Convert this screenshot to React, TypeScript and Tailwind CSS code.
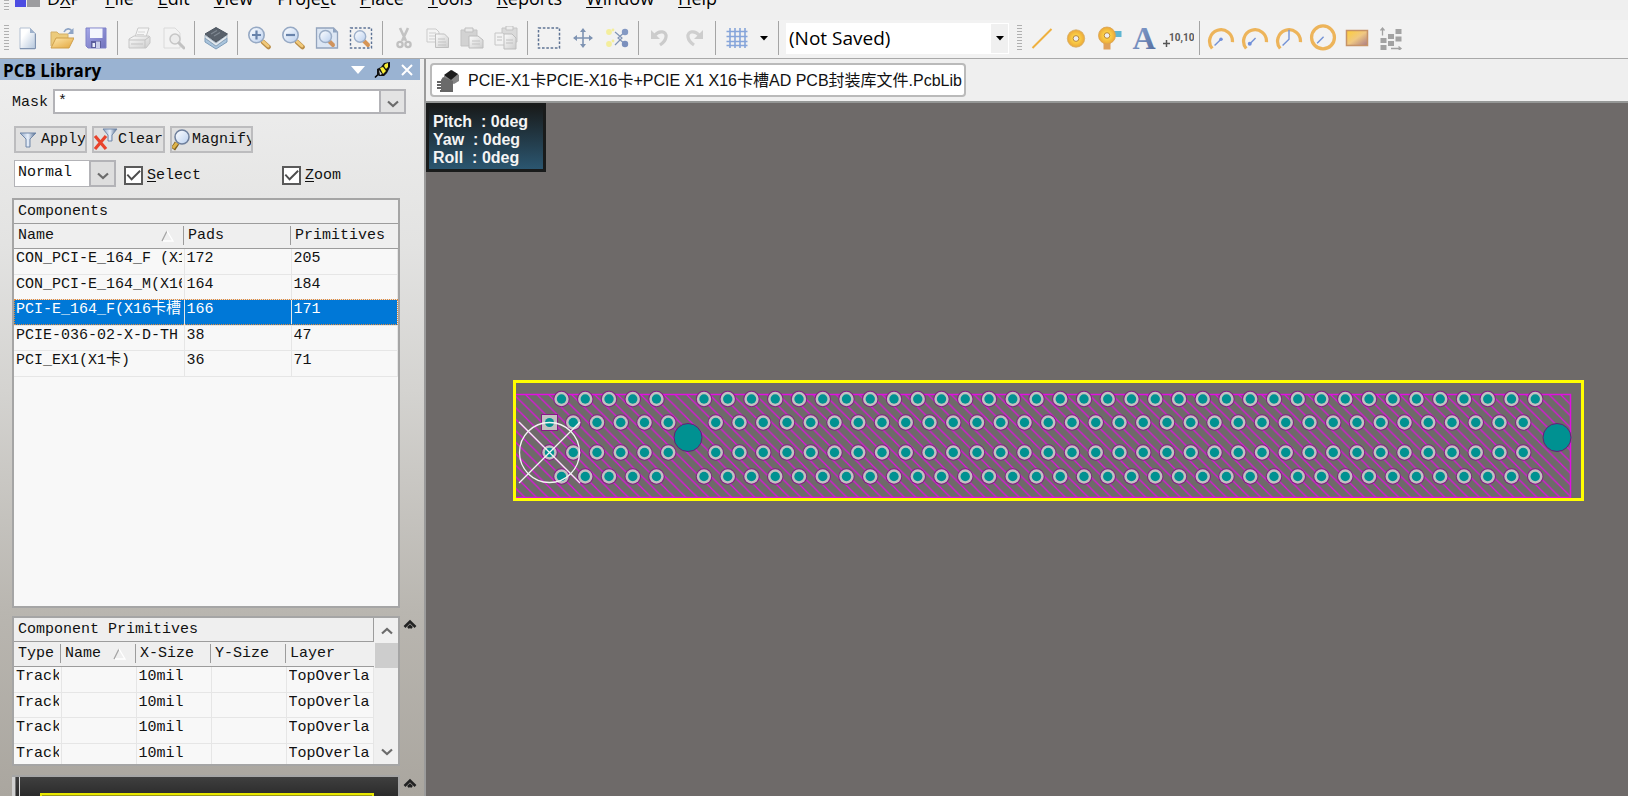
import React, { ReactNode } from "react";

const GOLD = "#edb45a";

function Icon({ children, size = 24 }: { children: ReactNode; size?: number }) {
  return (
    <svg width={size} height={size} viewBox="0 0 24 24" fill="none" className="shrink-0" aria-hidden="true">
      {children}
    </svg>
  );
}

function Gradients() {
  return (
    <svg width="0" height="0" className="absolute" aria-hidden="true">
      <defs>
        <linearGradient id="paper" x1="0" y1="0" x2="1" y2="1">
          <stop offset="0.3" stopColor="#ffffff" />
          <stop offset="1" stopColor="#b4c6dc" />
        </linearGradient>
        <linearGradient id="folder" x1="0" y1="0" x2="1" y2="1">
          <stop offset="0" stopColor="#ffe9ae" />
          <stop offset="1" stopColor="#e2a63d" />
        </linearGradient>
        <linearGradient id="disk" x1="0" y1="0" x2="1" y2="1">
          <stop offset="0" stopColor="#a6a8e8" />
          <stop offset="1" stopColor="#7072bc" />
        </linearGradient>
        <linearGradient id="grey" x1="0" y1="0" x2="1" y2="1">
          <stop offset="0" stopColor="#fbfbfb" />
          <stop offset="1" stopColor="#cdcdcd" />
        </linearGradient>
        <linearGradient id="lens" x1="0" y1="0" x2="1" y2="1">
          <stop offset="0" stopColor="#ffffff" />
          <stop offset="1" stopColor="#b9cfee" />
        </linearGradient>
        <linearGradient id="fillRect" x1="0" y1="0" x2="1" y2="1">
          <stop offset="0" stopColor="#ffce35" />
          <stop offset="0.5" stopColor="#f0c882" />
          <stop offset="1" stopColor="#a97a86" />
        </linearGradient>
        <linearGradient id="funnel" x1="0" y1="0" x2="1" y2="0">
          <stop offset="0" stopColor="#8ea4c4" />
          <stop offset="0.5" stopColor="#e8f0fb" />
          <stop offset="1" stopColor="#4a6288" />
        </linearGradient>
        <radialGradient id="ring">
          <stop offset="0.3" stopColor="#ffd84a" />
          <stop offset="1" stopColor="#eba739" />
        </radialGradient>
        <linearGradient id="letter" x1="0" y1="0" x2="1" y2="1">
          <stop offset="0" stopColor="#93addb" />
          <stop offset="1" stopColor="#4f6799" />
        </linearGradient>
      </defs>
    </svg>
  );
}

const NewIcon = () => (
  <Icon>
    <path d="M4 2h10l5 5v16H4z" fill="url(#paper)" stroke="#b3c0d2" />
    <path d="M4 22.500h15.500V7.500" stroke="#8093b0" />
    <path d="M14 2l5 5h-5z" fill="#9fb2cc" />
  </Icon>
);
const OpenIcon = () => (
  <Icon>
    <path d="M1 20V6h6l2 2h9v5" fill="#eccb7c" stroke="#d3b068" />
    <path d="M1 22L6 12h18l-5 10z" fill="url(#folder)" stroke="#cf9f4b" />
    <path d="M14 6c2-4 6-4 8-1" stroke="#8ea4c5" strokeWidth="1.600" />
    <path d="M23.500 2v6h-6z" fill="#8ea4c5" />
  </Icon>
);
const SaveIcon = () => (
  <Icon>
    <path d="M2 2h20v20H4l-2-2z" fill="url(#disk)" stroke="#7f81c8" />
    <path d="M6 2.500h12.500V12H6z" fill="#f4f6fd" />
    <path d="M7 15h10v7H7z" fill="#5c5e9e" />
    <path d="M12 15.500h4V22h-4z" fill="#c9cdea" />
    <path d="M8.500 17h2.500v4H8.500z" fill="#e9ecf8" />
  </Icon>
);
const PrintIcon = () => (
  <Icon>
    <path d="M8 11l3-9h11l-3 9" fill="#f6f6f6" stroke="#cbcbcb" />
    <path d="M11 6h7M10 8.500h7" stroke="#d6d6d6" />
    <path d="M2 13l5-3h15l1 1v6l-4 5H2z" fill="url(#grey)" stroke="#c6c6c6" />
    <path d="M2 14h16l4-3M18 14v8M4 18h12" stroke="#c3c3c3" />
  </Icon>
);
const PreviewIcon = () => (
  <Icon>
    <path d="M3 2h11l5 5v15H3z" fill="#f3f3f3" stroke="#dadada" />
    <circle cx="14" cy="13" r="5" fill="#ececec" stroke="#c6c6c6" strokeWidth="1.500" />
    <path d="M18 17l5 5" stroke="#c2c2c2" strokeWidth="3" strokeLinecap="round" />
  </Icon>
);
const BrowseIcon = () => (
  <Icon>
    <path d="M1 12l11 8 11-8v4l-11 7L1 16z" fill="#a9c4dc" stroke="#7f9dba" />
    <path d="M1 9l11 8 11-8v3l-11 8L1 12z" fill="#e3e9ee" stroke="#7890a6" strokeWidth=".6" />
    <path d="M1 8l11-6.500L23.500 8 12 16z" fill="#59616b" stroke="#4c5560" />
    <path d="M7 8l6-3.500M10 10l6-3.500" stroke="#7f8892" strokeWidth="1.300" />
  </Icon>
);
function Lens({ sign }: { sign: "plus" | "minus" }) {
  return (
    <Icon>
      <path d="M16 16l5.500 5" stroke="#b98c46" strokeWidth="4.600" strokeLinecap="round" />
      <path d="M16 15.500l5 4.500" stroke="#f1c97a" strokeWidth="3" strokeLinecap="round" />
      <circle cx="9.500" cy="9" r="7.700" fill="url(#lens)" stroke="#96a9c4" strokeWidth="1.600" />
      <path d={sign === "plus" ? "M5 9h9M9.500 4.500v9" : "M5 9h9"} stroke="#6883ab" strokeWidth="2.200" />
    </Icon>
  );
}
const FitIcon = () => (
  <Icon>
    <path d="M1.500 2h17l4 4v16h-21z" fill="#dce6f3" stroke="#93a4bd" strokeWidth="1.300" />
    <path d="M18 2v4.500h4.500" fill="#8ea3c0" />
    <path d="M14 15l4 4" stroke="#d0935c" strokeWidth="4" strokeLinecap="round" />
    <circle cx="10.500" cy="10.500" r="6" fill="url(#lens)" stroke="#9badc6" strokeWidth="1.500" />
  </Icon>
);
const ZoomAreaIcon = () => (
  <Icon>
    <rect x="1.500" y="2" width="21" height="20" stroke="#5c7295" strokeWidth="1.400" strokeDasharray="2.500 1.800" />
    <path d="M15 15l4 4" stroke="#d79555" strokeWidth="4" strokeLinecap="round" />
    <circle cx="11" cy="10.500" r="5.700" fill="url(#lens)" stroke="#9db0cb" strokeWidth="1.400" />
  </Icon>
);
const CutIcon = () => (
  <Icon>
    <path d="M8 2l6 13M16 2l-6 13" stroke="#c3c3c3" strokeWidth="2.600" />
    <circle cx="8" cy="18.500" r="2.600" stroke="#c0c0c0" strokeWidth="2.300" />
    <circle cx="16" cy="18.500" r="2.600" stroke="#c0c0c0" strokeWidth="2.300" />
  </Icon>
);
const CopyIcon = () => (
  <Icon>
    <path d="M1 3h9l3 3v10H1z" fill="#f4f4f4" stroke="#cbcbcb" />
    <path d="M3 7h7M3 10h7M3 13h7" stroke="#cfcfcf" />
    <path d="M9.500 8h9l4 4v9.500h-13z" fill="url(#grey)" stroke="#bfbfbf" />
    <path d="M12 13h7M12 16h8M12 19h8" stroke="#c3c3c3" />
  </Icon>
);
const PasteIcon = () => (
  <Icon>
    <path d="M1 4h16v16H1z" fill="#d2d2d2" stroke="#c3c3c3" />
    <path d="M5 2h8v4H5z" fill="#e9e9e9" stroke="#bfbfbf" />
    <path d="M9 10h9l5 4v8H9z" fill="url(#grey)" stroke="#bcbcbc" />
    <path d="M12 15h8M12 18h8" stroke="#c3c3c3" />
  </Icon>
);
const StampIcon = () => (
  <Icon>
    <path d="M8 2h15v14H8z" fill="#dadada" stroke="#c6c6c6" />
    <path d="M12 0h7v4h-7z" fill="#ededed" stroke="#c3c3c3" />
    <path d="M1 7h8l3 3v9H1z" fill="#f3f3f3" stroke="#c6c6c6" />
    <path d="M10 8h8l4 4v11H10z" fill="url(#grey)" stroke="#bdbdbd" />
    <path d="M3 11h5M3 14h5M12 14h7M12 17h7" stroke="#c0c0c0" />
  </Icon>
);
const SelectIcon = () => (
  <Icon>
    <rect x="1.500" y="2" width="21" height="20" stroke="#5f7494" strokeWidth="1.500" strokeDasharray="2.600 1.700" />
  </Icon>
);
const MoveIcon = () => (
  <Icon>
    <path d="M12 3v18M3 12h18" stroke="#7e93b2" strokeWidth="1.600" />
    <path d="M12 2L9 6h6zM12 22l-3-4h6zM2 12l4-3v6zM22 12l-4-3v6z" fill="#7e93b2" />
  </Icon>
);
const DeselectIcon = () => (
  <Icon>
    <path d="M10 6l7 6-7 7M21 5l-8 7 8 7" stroke="#8094b5" strokeWidth="1.200" />
    <circle cx="4" cy="6" r="2.900" fill="#f4ee9c" />
    <circle cx="8" cy="4" r="1.400" fill="#f4ee9c" />
    <circle cx="4" cy="18" r="2.900" fill="#f4ee9c" />
    <circle cx="8" cy="15" r="1.400" fill="#f4ee9c" />
    <circle cx="20" cy="6" r="3.200" fill="#8499c3" />
    <circle cx="20" cy="18" r="3.200" fill="#7b90bd" />
  </Icon>
);
const UndoIcon = () => (
  <Icon>
    <path d="M7 9c4-5 12-4 11 2-.5 4-3 6-6 8" stroke="#cbcbcb" strokeWidth="3.200" />
    <path d="M3 4v9h9z" fill="#cdcdcd" />
  </Icon>
);
const RedoIcon = () => (
  <Icon>
    <path d="M17 9C13 4 5 5 6 11c.5 4 3 6 6 8" stroke="#cfcfcf" strokeWidth="3.200" />
    <path d="M21 4v9h-9z" fill="#cdcdcd" />
  </Icon>
);
const GridIcon = () => (
  <Icon>
    <path d="M5 2v20M10 2v20M15 2v20M20 2v20M1.500 5.500h21M1.500 10.500h21M1.500 15.500h21M1.500 19.500h21" stroke="#86a5da" strokeWidth="1.600" />
  </Icon>
);
const LineIcon = () => (
  <Icon>
    <path d="M2.500 22L21.500 3" stroke="#eeb03f" strokeWidth="2" />
  </Icon>
);
const PadIcon = () => (
  <Icon>
    <circle cx="12" cy="12.500" r="8.700" fill="url(#ring)" stroke="#d6b06c" strokeWidth=".8" />
    <circle cx="12" cy="12.500" r="2.900" fill="#eeeef2" stroke="#b98531" />
  </Icon>
);
const ViaIcon = () => (
  <Icon>
    <path d="M13 5h10.500v6H13z" fill="#5eb6d2" />
    <path d="M5.500 14h7v9.500h-7z" fill="#e0a05b" />
    <circle cx="9" cy="9.500" r="8.500" fill="url(#ring)" stroke="#d9a353" strokeWidth=".8" />
    <circle cx="9" cy="9.500" r="2.800" fill="#eeeef2" stroke="#b98531" />
  </Icon>
);
const TextIcon = () => (
  <svg width="26" height="26" viewBox="0 0 26 26" aria-hidden="true">
    <text x="13" y="24" textAnchor="middle" fontSize="32" fontWeight="700" fill="url(#letter)" fontFamily="Liberation Serif, serif">
      A
    </text>
  </svg>
);
const CoordIcon = () => (
  <svg width="32" height="24" viewBox="0 0 32 24" aria-hidden="true">
    <path d="M1 17.500h7M4.500 14v7" stroke="#555" strokeWidth="1.500" />
    <text x="7" y="15" fontSize="10" fontWeight="700" fill="#5a5a5a" fontFamily="Roboto, sans-serif">
      10,10
    </text>
  </svg>
);
function ArcIcon({ hand }: { hand: ReactNode }) {
  return (
    <Icon size={28}>
      <path d="M4.500 21A9.800 9.800 0 1 1 21.800 15.500" stroke={GOLD} strokeWidth="2.800" />
      {hand}
    </Icon>
  );
}
const CircleIcon = () => (
  <Icon size={28}>
    <circle cx="12" cy="11.500" r="9.800" stroke={GOLD} strokeWidth="2.800" />
    <path d="M12.500 11L7 16.500" stroke="#7392d6" strokeWidth="1.200" />
  </Icon>
);
const FillIcon = () => (
  <Icon>
    <rect x="1.500" y="4.500" width="21" height="15" fill="url(#fillRect)" stroke="#c69367" strokeWidth="1.500" />
  </Icon>
);
const ArrayIcon = () => (
  <Icon>
    <path d="M1.500 12h6v5h-6zM1.500 19h6v5h-6zM9 8h6v5H9zM9 15h6v5H9zM16.500 3h6v5h-6zM16.500 10.500h6v5h-6z" fill="#a2a2a2" />
    <path d="M3.500 9.500V3M1.500 4.500L3.500 2l2 2.500M12 22.500h9M19.500 20.500l2.500 2-2.500 2" stroke="#a2a2a2" strokeWidth="1.300" />
  </Icon>
);
const Chevron = ({ className }: { className?: string }) => (
  <svg width="14" height="8" viewBox="0 0 14 8" fill="none" className={className} aria-hidden="true">
    <path d="M2 1.500l5 4.500 5-4.500" stroke="#6b6b6b" strokeWidth="2.200" />
  </svg>
);

const toolGroups: [string, ReactNode][][] = [
  [["New", <NewIcon />], ["Open", <OpenIcon />], ["Save", <SaveIcon />]],
  [["Print", <PrintIcon />], ["Print preview", <PreviewIcon />]],
  [["Browse", <BrowseIcon />]],
  [["Zoom in", <Lens sign="plus" />], ["Zoom out", <Lens sign="minus" />], ["Fit document", <FitIcon />], ["Zoom area", <ZoomAreaIcon />]],
  [["Cut", <CutIcon />], ["Copy", <CopyIcon />], ["Paste", <PasteIcon />], ["Rubber stamp", <StampIcon />]],
  [["Select", <SelectIcon />], ["Move", <MoveIcon />], ["Deselect", <DeselectIcon />]],
  [["Undo", <UndoIcon />], ["Redo", <RedoIcon />]],
];

const placeGroups: [string, ReactNode][][] = [
  [["Line", <LineIcon />], ["Pad", <PadIcon />], ["Via", <ViaIcon />], ["String", <TextIcon />], ["Coordinate", <CoordIcon />]],
  [
    ["Arc by center", <ArcIcon hand={<><path d="M6.500 18.500L12 13" stroke="#7392d6" strokeWidth="1.200" /><circle cx="12" cy="13" r="1.500" fill="#6f8fdc" /></>} />],
    ["Arc by edge", <ArcIcon hand={<><path d="M7 17.500L12.500 12" stroke="#7392d6" strokeWidth="1.200" /><circle cx="7.500" cy="17" r="1.700" fill="#6f8fdc" /></>} />],
    ["Arc any angle", <ArcIcon hand={<path d="M12 5v8l-5.500 5.500" stroke="#7392d6" strokeWidth="1.200" />} />],
    ["Full circle", <CircleIcon />],
    ["Fill", <FillIcon />],
    ["Paste array", <ArrayIcon />],
  ],
];

const ToolButton = ({ label, children }: { label: string; children: ReactNode }) => (
  <button type="button" aria-label={label} className="flex h-8 w-[34px] shrink-0 items-center justify-center">
    {children}
  </button>
);

const Separator = () => (
  <div className="flex h-[34px] w-[9px] shrink-0 justify-center">
    <div className="w-px bg-[#a5a5a5]" />
  </div>
);

const Grip = () => (
  <div className="h-[26px] w-[5px] shrink-0 bg-[repeating-linear-gradient(#b0b0b0_0_1px,#f2f2f2_1px_3px)]" />
);

const menus = [
  ["D", "X", "P"],
  ["", "F", "ile"],
  ["", "E", "dit"],
  ["", "V", "iew"],
  ["Proje", "c", "t"],
  ["", "P", "lace"],
  ["", "T", "ools"],
  ["", "R", "eports"],
  ["", "W", "indow"],
  ["", "H", "elp"],
];

const components = [
  ["CON_PCI-E_164_F (X1", 172, 205],
  ["CON_PCI-E_164_M(X16", 164, 184],
  ["PCI-E_164_F(X16卡槽", 166, 171],
  ["PCIE-036-02-X-D-TH", 38, 47],
  ["PCI_EX1(X1卡)", 36, 71],
];

const primitives = [0, 1, 2, 3].map(() => ["Track", "", "10mil", "", "TopOverla"]);

const SortMark = () => (
  <svg width="14" height="12" viewBox="0 0 14 12" fill="none" className="shrink-0" aria-hidden="true">
    <path d="M1 11L6 1" stroke="#a3a3a3" strokeWidth="1.300" />
    <path d="M6 1l6 10H2" stroke="#fff" strokeWidth="1.300" />
  </svg>
);

function HeaderCell({ children, sorted, last }: { children: ReactNode; sorted?: boolean; last?: boolean }) {
  return (
    <th scope="col" className="h-6 border-b border-[#9c9c9c] bg-[#efefef] p-0 text-left font-normal">
      <div className={last ? "flex h-[19px] items-center pl-1" : "flex h-[19px] items-center justify-between border-r border-[#9c9c9c] pl-1 pr-2"}>
        {children}
        {sorted && <SortMark />}
      </div>
    </th>
  );
}

function BodyRow({ cells, selected }: { cells: ReactNode[]; selected?: boolean }) {
  return (
    <tr
      className={
        selected
          ? "h-[26px] bg-[#0078d7] text-white outline-1 -outline-offset-1 outline-dotted outline-[#e08a3c]"
          : "h-[25px] odd:h-[26px]"
      }
    >
      {cells.map((cell, c) => (
        <td key={c} className="border-b border-r border-[#e6e6e6] p-0 pb-1 pl-[2px] pr-[2px]">
          <div className="overflow-hidden whitespace-nowrap">{cell}</div>
        </td>
      ))}
    </tr>
  );
}

function Check({ id, mnemonic, rest }: { id: string; mnemonic: string; rest: string }) {
  return (
    <div className="flex items-center gap-1">
      <span className="relative flex h-[19px] w-[19px]">
        <input
          id={id}
          type="checkbox"
          defaultChecked
          className="peer h-full w-full appearance-none border-2 border-[#5a5a5a] bg-white"
        />
        <svg viewBox="0 0 20 19" fill="none" className="pointer-events-none absolute inset-0 hidden peer-checked:block" aria-hidden="true">
          <path d="M3.500 9l4.500 5 9-9" stroke="#4d4d4d" strokeWidth="2" />
        </svg>
      </span>
      <label htmlFor={id}>
        <span className="underline underline-offset-2">{mnemonic}</span>
        {rest}
      </label>
    </div>
  );
}

const Collapse = () => (
  <button type="button" aria-label="Collapse section" className="flex h-4 w-5 items-center justify-center">
    <svg width="14" height="10" viewBox="0 0 14 10" fill="none">
      <path d="M1.500 8L7 2.500 12.500 8M5 9l2-2 2 2" stroke="#222" strokeWidth="2.600" />
    </svg>
  </button>
);

function LibraryPanel() {
  return (
    <aside className="flex w-[426px] shrink-0 flex-col overflow-hidden border-r-2 border-[#9b9b9b] bg-[linear-gradient(#efefef_0%,#e3e3e2_25%,#d4d3d0_45%,#b9b6b0_75%,#aaa69f_100%)] font-['Liberation_Mono','Noto_Sans_CJK_SC',monospace] text-[15px] leading-5 text-[#111]">
      <div className="mr-1 flex h-[21px] shrink-0 items-center bg-[#9ab3d2] pl-[3px] pr-[6px] font-['Open_Sans',sans-serif] text-[17px] font-bold text-black">
        <h2 className="flex-1 pt-[2px]">PCB Library</h2>
        <div className="flex items-center gap-2">
          <button type="button" aria-label="Panel menu">
            <svg width="16" height="10" viewBox="0 0 16 10"><path d="M1 1h14L8 9z" fill="#fff" /></svg>
          </button>
          <button type="button" aria-label="Pin panel">
            <svg width="18" height="18" viewBox="0 0 18 18">
              <path d="M1 16.500l4-4" stroke="#000" strokeWidth="1.600" />
              <path d="M3 8l4-2 3-4 6-1v5l-3 6-3 3H5L3 13z" fill="#111" />
              <path d="M6 7l3-1 3 4-3 3zM11 3l3-1v4l-2 2-2-3z" fill="#f7ee35" />
              <path d="M5 9l3 4-2 1z" fill="#d9dcd0" />
            </svg>
          </button>
          <button type="button" aria-label="Close panel">
            <svg width="14" height="14" viewBox="0 0 14 14"><path d="M2 2l10 10M12 2L2 12" stroke="#fff" strokeWidth="2" /></svg>
          </button>
        </div>
      </div>

      <div className="mt-[9px] flex h-[25px] shrink-0 items-center pl-3 pr-[18px]">
        <label htmlFor="mask" className="w-[41px] pt-[2px]">Mask</label>
        <div className="flex h-full flex-1 border-2 border-[#b3b3b7] bg-white">
          <input id="mask" defaultValue="*" className="min-w-0 flex-1 bg-transparent px-[3px] outline-none" />
          <button type="button" aria-label="Mask history" className="flex w-[25px] items-center justify-center border-l-2 border-[#b3b3b7] bg-[#e3e3e3] pt-1">
            <Chevron />
          </button>
        </div>
      </div>

      <div className="mt-3 flex h-[27px] shrink-0 gap-[5px] pl-[14px]">
        <button type="button" className="flex w-[73px] items-center gap-1 overflow-hidden border-2 border-[#bcbcbe] bg-[#e0e0e0] pl-[3px]">
          <svg width="18" height="16" viewBox="0 0 18 16" className="shrink-0" aria-hidden="true">
            <path d="M1 1h16l-6 6v8H7V7z" fill="url(#funnel)" stroke="#7087a8" />
          </svg>
          Apply
        </button>
        <button type="button" className="flex w-[73px] items-center overflow-hidden border-2 border-[#bcbcbe] bg-[#e0e0e0]">
          <svg width="24" height="24" viewBox="0 0 24 24" className="shrink-0" aria-hidden="true">
            <path d="M9 1h14l-5 6v6h-4V7z" fill="url(#funnel)" stroke="#7087a8" />
            <path d="M1 8l11 13M12 8L1 21" stroke="#e8432c" strokeWidth="3.200" />
          </svg>
          Clear
        </button>
        <button type="button" className="flex w-[83px] items-center gap-[2px] overflow-hidden border-2 border-[#bcbcbe] bg-[#e0e0e0]">
          <svg width="18" height="22" viewBox="0 0 18 22" className="shrink-0" aria-hidden="true">
            <path d="M5 14l-4 6" stroke="#80601c" strokeWidth="5" />
            <path d="M5 14l-4 5" stroke="#dfb44a" strokeWidth="3" />
            <circle cx="10" cy="8" r="7" fill="url(#lens)" stroke="#6e7f9c" strokeWidth="1.500" />
          </svg>
          Magnify
        </button>
      </div>

      <div className="mt-[7px] flex h-[27px] shrink-0 items-center pl-[14px]">
        <div className="relative mr-[8px] h-full w-[102px]">
          <select aria-label="Display mode" defaultValue="Normal" className="h-full w-full appearance-none border border-[#b3b3b7] bg-[linear-gradient(90deg,#fff_0_75px,#dedede_75px)] pb-[2px] pl-[3px] outline-none">
            <option>Normal</option>
          </select>
          <span className="pointer-events-none absolute inset-y-0 right-0 flex w-[27px] items-center justify-center border-2 border-[#b3b3b7] pt-1">
            <Chevron />
          </span>
        </div>
        <div className="w-[158px] pt-1"><Check id="select" mnemonic="S" rest="elect" /></div>
        <div className="pt-1"><Check id="zoom" mnemonic="Z" rest="oom" /></div>
      </div>

      <section className="ml-3 mr-6 mt-[11px] min-h-0 flex-1 overflow-hidden border-2 border-[#a5a5a5] bg-[#f8f8f8]">
        <table className="w-full table-fixed border-collapse">
          <caption className="h-6 border-b border-[#9c9c9c] bg-[#efefef] pl-1 text-left leading-6">Components</caption>
          <colgroup><col className="w-[170px]" /><col className="w-[107px]" /><col /></colgroup>
          <thead>
            <tr>
              <HeaderCell sorted>Name</HeaderCell>
              <HeaderCell>Pads</HeaderCell>
              <HeaderCell last>Primitives</HeaderCell>
            </tr>
          </thead>
          <tbody>
            {components.map((row, r) => (
              <BodyRow key={r} cells={row} selected={r === 2} />
            ))}
          </tbody>
        </table>
      </section>

      <div className="mt-2 flex h-[150px] shrink-0 pl-3">
        <section className="flex w-[388px] overflow-hidden border-2 border-[#a5a5a5] bg-[#f8f8f8]">
          <table className="w-[360px] table-fixed border-collapse self-start">
            <caption className="h-6 border-b border-r border-[#9c9c9c] bg-[#efefef] pl-1 text-left leading-6">Component Primitives</caption>
            <colgroup>
              <col className="w-[47px]" /><col className="w-[75px]" /><col className="w-[75px]" /><col className="w-[75px]" /><col />
            </colgroup>
            <thead>
              <tr>
                <HeaderCell>Type</HeaderCell>
                <HeaderCell sorted>Name</HeaderCell>
                <HeaderCell>X-Size</HeaderCell>
                <HeaderCell>Y-Size</HeaderCell>
                <HeaderCell last>Layer</HeaderCell>
              </tr>
            </thead>
            <tbody>
              {primitives.map((row, r) => (
                <BodyRow key={r} cells={row} />
              ))}
            </tbody>
          </table>
          <div className="flex flex-1 flex-col bg-[#f0f0f0] pl-px">
            <button type="button" aria-label="Scroll up" className="flex h-[25px] items-center justify-center">
              <Chevron className="rotate-180" />
            </button>
            <div className="h-[25px] bg-[#cdcdcd]" />
            <div className="flex-1" />
            <button type="button" aria-label="Scroll down" className="flex h-6 items-center justify-center">
              <Chevron />
            </button>
          </div>
        </section>
        <Collapse />
      </div>

      <div className="mt-[9px] flex h-[21px] shrink-0 pl-3">
        <div className="flex w-[388px] border-t-2 border-r-2 border-[#a5a5a5] bg-[linear-gradient(#3f3f3f,#2b2b2b)]">
          <div className="mr-px w-1 border-r border-[#777] bg-[#d0d0d0]" />
          <div className="w-[3px] border-r border-[#d8d8d8]" />
          <div className="ml-5 mr-6 mt-4 h-8 flex-1 border-2 border-[#e8e800] bg-[#9a9620]" />
        </div>
        <Collapse />
      </div>
    </aside>
  );
}

const PITCH = 23.75;
const outerPads = Array.from({ length: 42 }, (_, i) => i).filter((i) => i !== 5);
const innerPads = Array.from({ length: 42 }, (_, i) => i).filter((i) => i !== 6);

function Pad({ x, y }: { x: number; y: number }) {
  return (
    <g>
      <circle cx={x} cy={y} r="8.200" fill="#861a86" />
      <circle cx={x} cy={y} r="7.200" fill="#c2c0c0" />
      <circle cx={x} cy={y} r="4.700" fill="#009191" />
    </g>
  );
}

function Footprint() {
  return (
    <svg width="1202" height="693" viewBox="426 103 1202 693" className="block shrink-0" role="img" aria-label="PCI-E_164_F footprint">
      <defs>
        <pattern id="hatch" width="11.500" height="11.500" patternUnits="userSpaceOnUse" x="527" y="396">
          <path d="M-1 -1L12.500 12.500M-1 10.500L1 12.500M10.500 -1L12.500 1" stroke="#e010e0" strokeWidth="1.200" />
        </pattern>
      </defs>
      <rect x="516" y="394" width="1055" height="104" fill="url(#hatch)" />
      <path d="M516 394.500H1570.500V497.500H516" fill="none" stroke="#e010e0" strokeWidth="1.500" />
      <rect x="514.500" y="381.500" width="1068" height="118" fill="none" stroke="#ffff00" strokeWidth="3" />
      {outerPads.map((i) => (
        <g key={i}>
          <Pad x={561.5 + i * PITCH} y={399} />
          <Pad x={561.5 + i * PITCH} y={476.5} />
        </g>
      ))}
      {innerPads.map((i) => (
        <g key={i}>
          {i > 0 && <Pad x={549.5 + i * PITCH} y={422.5} />}
          <Pad x={549.5 + i * PITCH} y={452.5} />
        </g>
      ))}
      <rect x="541.500" y="414.500" width="16" height="16" fill="#c4c2c2" stroke="#861a86" />
      <circle cx="549.500" cy="422.500" r="4.500" fill="#009191" />
      {[688, 1557].map((x) => (
        <circle key={x} cx={x} cy="437.500" r="14" fill="#009191" stroke="#6c1a78" />
      ))}
      <g stroke="#f4f4f4" strokeWidth="1.300" fill="none">
        <circle cx="549.500" cy="452.500" r="30" />
        <path d="M519 422l61 61M580 422l-61 61" />
      </g>
    </svg>
  );
}

export default function App() {
  return (
    <div className="flex h-screen flex-col overflow-hidden bg-[#efefef] font-['Open_Sans',sans-serif] text-black">
      <Gradients />
      <nav className="h-5 shrink-0 overflow-hidden pl-1">
        <div className="-mt-[14px] flex h-6 items-start text-lg leading-6">
          <div className="mt-[14px] h-[11px] w-[5px] bg-[repeating-linear-gradient(#b0b0b0_0_1px,#f2f2f2_1px_3px)]" />
          <svg width="26" height="22" viewBox="0 0 26 22" className="ml-[6px] mr-[6px] shrink-0" aria-hidden="true">
            <path d="M0 4h11v17H0z" fill="#4d4de2" />
            <path d="M12 21V12l5-6h8v15z" fill="#9c9c9f" />
          </svg>
          <div className="flex gap-6">
            {menus.map(([before, key, after]) => (
              <a key={before + key + after} href="#" className="whitespace-nowrap">
                {before}
                <span className="underline underline-offset-2">{key}</span>
                {after}
              </a>
            ))}
          </div>
        </div>
      </nav>

      <div className="flex h-[39px] shrink-0 items-center border-b border-[#a9a9a9] bg-[#f2f2f2] pb-[2px] pl-1">
        <Grip />
        <div className="ml-[2px] flex items-center">
          {toolGroups.map((group, g) => (
            <div key={g} className="flex items-center">
              {group.map(([label, icon]) => (
                <ToolButton key={label} label={label}>{icon}</ToolButton>
              ))}
              <Separator />
            </div>
          ))}
          <ToolButton label="Grid"><GridIcon /></ToolButton>
          <button type="button" aria-label="Grid options" className="flex h-8 w-5 items-center justify-center">
            <svg width="8" height="6" viewBox="0 0 8 6"><path d="M0 1h8L4 5.500z" fill="#000" /></svg>
          </button>
          <Separator />
        </div>
        <div className="relative ml-[3px] h-[31px] w-[223px] shrink-0">
          <select aria-label="Saved view" className="h-full w-full appearance-none bg-white pl-[3px] text-[19px] leading-6 outline-none">
            <option>(Not Saved)</option>
          </select>
          <span className="pointer-events-none absolute inset-y-px right-px flex w-[17px] items-center justify-center bg-[#f0f0f0]">
            <svg width="8" height="6" viewBox="0 0 8 6"><path d="M0 1h8L4 5.500z" fill="#000" /></svg>
          </span>
        </div>
        <div className="ml-2 mr-[3px] flex"><Grip /></div>
        <div className="flex items-center">
          {placeGroups.map((group, g) => (
            <div key={g} className="flex items-center">
              {g > 0 && <Separator />}
              {group.map(([label, icon]) => (
                <ToolButton key={label} label={label}>{icon}</ToolButton>
              ))}
            </div>
          ))}
        </div>
      </div>

      <div className="flex min-h-0 flex-1">
        <LibraryPanel />
        <main className="flex min-w-0 flex-1 flex-col">
          <div className="flex h-11 shrink-0 items-start border-b-2 border-[#959796] pl-1 pt-1">
            <button type="button" className="flex h-[34px] items-center gap-2 whitespace-nowrap rounded-sm border-2 border-[#bababa] bg-white pl-1 pr-[2px] pt-[2px] font-['Liberation_Sans','Noto_Sans_CJK_SC',sans-serif] text-base leading-6 text-[#111]">
              <Icon>
                <path d="M8 7l8-6 7 5v6l-5 3-10-4z" fill="#858585" />
                <path d="M8 6l7-5 7 4-7 6z" fill="#1c1c1c" />
                <path d="M5 11l2-3 10 4v9H5z" fill="#6a6a6a" />
                <path d="M1 13h4M1 16h4M1 19h4M4 22h13" stroke="#333" strokeWidth="1.500" />
              </Icon>
              PCIE-X1卡PCIE-X16卡+PCIE X1 X16卡槽AD PCB封装库文件.PcbLib
            </button>
          </div>
          <div className="relative min-h-0 flex-1 overflow-hidden bg-[#6e6a69]">
            <Footprint />
            <div className="absolute left-0 top-0 w-[120px] whitespace-pre border-[3px] border-[#191b1b] bg-[linear-gradient(#191b1b,#2b5670)] pb-[2px] pl-1 pt-[7px] font-['Liberation_Sans',sans-serif] text-base font-bold leading-[18px] text-[#f4f4f4]">
              <p>Pitch  : 0deg</p>
              <p>Yaw  : 0deg</p>
              <p>Roll  : 0deg</p>
            </div>
          </div>
        </main>
      </div>
    </div>
  );
}
